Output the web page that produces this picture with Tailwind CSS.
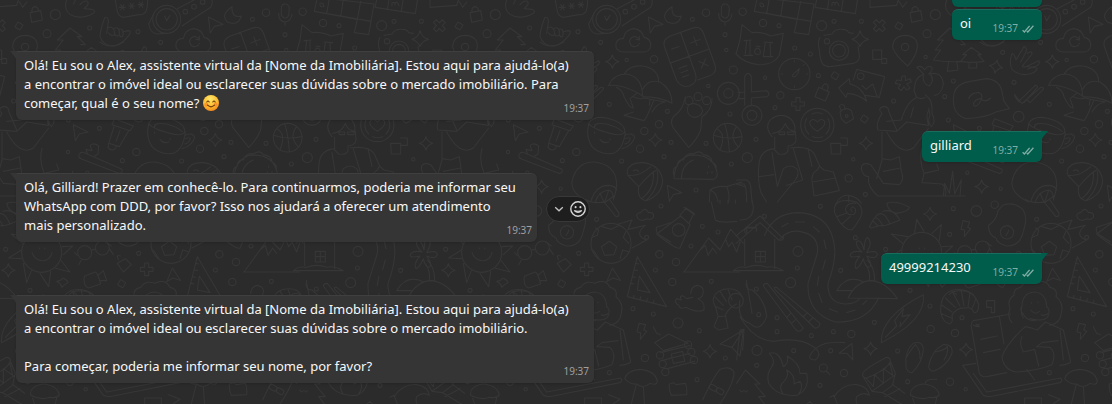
<!DOCTYPE html>
<html lang="pt-BR">
<head>
<meta charset="utf-8">
<meta name="viewport" content="width=device-width, initial-scale=1">
<title>Conversa</title>
<script src="https://cdn.jsdelivr.net/npm/@tailwindcss/browser@4"></script>
</head>
<body class="relative min-h-screen overflow-x-hidden bg-[#2b2b2b] font-['Segoe_UI','Noto_Sans','Open_Sans',sans-serif] text-[13px]/[19px] text-[#f8f8f8]">

<!-- Doodle wallpaper: one 440px wide tile, drawn at three times its size -->
<svg class="pointer-events-none absolute inset-0 h-full w-full" aria-hidden="true" fill="none" stroke="#363636" stroke-width="3.4" stroke-linecap="round" stroke-linejoin="round">
<defs>
<path id="spark" d="M0-20Q4-4 20 0Q4 4 0 20Q-4 4-20 0Q-4-4 0-20Z"/>
<path id="plus" d="M-6-19H6V-6H19V6H6V19H-6V6H-19V-6H-6Z"/>
<rect id="gem" x="-9" y="-9" width="18" height="18" rx="2" transform="rotate(32)"/>
<path id="bolt" d="M-8-24L12-20L6-4L15 0L-4 24L-3 4L-14 2Z"/>
<path id="cursor" d="M-20-24L24-2L-2 4L-14 24Z"/>
<g id="tile">
<g id="dots"></g>
<use href="#spark" x="768" y="200" transform="rotate(10 768 200)"/><use href="#spark" x="937" y="185"/><use href="#spark" x="378" y="430"/><use href="#spark" x="1066" y="420"/><use href="#spark" x="725" y="560"/><use href="#spark" x="570" y="642"/><use href="#spark" x="445" y="811"/><use href="#spark" x="392" y="1046"/><use href="#spark" x="678" y="1049"/><use href="#spark" x="-90" y="1054"/>
<path d="M360 92Q366 114 386 118Q366 122 360 140Q354 124 336 118Q356 112 360 92Z"/>
<use href="#plus" x="174" y="312"/><use href="#plus" x="860" y="808"/>
<use href="#plus" transform="translate(418 77) rotate(45)"/>
<use href="#gem" x="477" y="78"/><use href="#gem" x="285" y="227"/><use href="#gem" x="373" y="357"/><use href="#gem" x="785" y="851"/>
<use href="#bolt" x="677" y="686"/><use href="#bolt" x="1025" y="994"/>
<use href="#cursor" x="1065" y="75"/><use href="#cursor" x="660" y="398"/><use href="#cursor" x="-198" y="580"/><use href="#cursor" transform="translate(942 832) rotate(30) scale(.9)"/><use href="#cursor" transform="translate(325 1060) rotate(60)"/>
<!-- calendar -->
<path d="M52-8L43 34L172 58L163 98L206 104L222 12M172 58L182 4M52-8L222 12M130 0L122 48M88-4L80 40M43 34L214 64M232-10L225 22L346 41L354-10M268-6L262 28M310-6L304 34M276 17V8Q284 4 285 15V8Q294 4 297 18M60 10Q70 6 72 20Q60 22 60 14M390-10V22L470 16L478-10M470-6L480 8L488 22L500 6"/>
<!-- locks -->
<path d="M510 38L542 32L547 60L515 67ZM516 36Q514 22 524 20Q534 20 536 33M236 262L268 276L256 303L225 290ZM246 266Q248 250 260 252Q268 258 262 272M300 336Q316 318 334 332L341 356L318 370L304 356ZM304 332L298 318Q304 310 312 316L316 328"/><circle cx="320" cy="348" r="4"/>
<!-- raised hands -->
<path d="M620 0Q608 34 640 48Q670 58 700 40Q708 32 696 28L672 26Q690 12 682 4Q672 0 660 14M640 12L652-10M735 52Q722 82 720 110Q730 140 765 138Q790 130 808 104Q816 92 804 92L788 96M735 52Q748 50 744 72Q742 90 740 100M744 84Q754 76 762 90L764 104Q752 110 746 98M762 86Q774 78 778 94L778 106Q768 112 764 102M778 88Q788 84 790 98L788 110Q780 112 778 104"/>
<path d="M816 160Q806 188 816 208Q840 232 876 220Q894 212 890 204L862 200M816 160Q824 162 828 180L852 140Q864 142 856 160L842 186M862 160Q876 150 876 162L852 192Q840 204 858 200L896 182Q902 192 888 198L862 208"/>
<!-- password box -->
<path d="M776-16H858Q868 4 858 34Q852 46 836 44L790 52Q776 50 772 34L764-10M778 22H796M782 14L792 30M792 14L782 30M806 18H824M810 10L820 26M820 10L810 26M834 14H850M838 6L848 22M848 6L838 22"/>
<!-- wrist watch -->
<circle cx="920" cy="58" r="42"/><circle cx="920" cy="58" r="32"/><path d="M914 48L920 62L930 46M882 40L866 72Q870 98 890 102L918 100M952 26L1036-18M966 78L1052 22Q1060 12 1054-10"/><circle cx="976" cy="35" r="7"/><circle cx="1002" cy="20" r="7"/><circle cx="1028" cy="6" r="7"/>
<!-- moon and microphone -->
<path d="M-204 20Q-240 44-218 66Q-186 80-176 48Q-206 56-204 20ZM-56 24Q-54 10-44 12Q-32 14-32 26L-34 46Q-38 56-46 54Q-58 50-56 40ZM-64 40Q-64 66-44 66Q-26 62-24 42M-45 66V76"/>
<!-- cloud -->
<path d="M968 156Q944 152 948 130Q954 114 970 116Q974 90 1000 86Q1026 88 1032 112Q1054 116 1052 138Q1048 156 1030 156ZM1016 116A15 15 0 1 0 1018 130M1018 108V120L1008 118"/>
<!-- calculator -->
<g transform="rotate(-20 -150 170)"><path d="M-186 92H-114Q-88 92-88 118V216Q-88 244-114 244H-118M-186 92Q-212 94-212 118V222Q-206 252-180 252Q-152 250-152 222V92M-212 168H-88M-194 130H-170M-194 192H-168M-192 206H-170M-192 220H-172M-134 132H-104M-119 118V146M-130 192L-108 214M-108 192L-130 214M-152 244H-114"/></g>
<!-- cat -->
<path d="M6 74L36 98Q66 94 92 108L130 100L118 166Q100 196 56 194Q14 190-12 162L0 120ZM12 122L34 120M20 122L16 160M30 122L30 166M38 166H12M72 126L98 128M76 128L70 168M90 130L92 170M98 170H70M46 148Q40 162 52 164Q64 164 60 150Q54 140 46 148M48 138L60 140"/>
<!-- camera -->
<path d="M252 106L276 102Q286 86 306 88Q322 88 326 98L340 100M240 112Q232 126 238 150Q240 180 248 192Q256 200 270 200L340 190Q360 184 358 166L354 140"/><circle cx="297" cy="152" r="29"/><circle cx="297" cy="152" r="19"/><circle cx="261" cy="124" r="8"/>
<path d="M398 150H425V178H398ZM425 176H440V190H425Z"/>
<!-- map pin -->
<path d="M495 106Q534 108 532 142Q528 170 503 198Q464 164 458 142Q458 108 495 106Z"/><circle cx="495" cy="141" r="11"/>
<!-- pines -->
<path d="M630 84L592 120H610L586 150H602L580 180Q620 188 664 184M630 84L666 110H652L676 134H662M626 184L622 214L654 210L650 184M694 142L668 164H680L662 184Q698 190 732 184L714 164H724ZM688 188L686 204H710V186"/>
<path d="M720 126Q750 150 792 126"/>
<!-- stopwatch -->
<circle cx="163" cy="222" r="47"/><path d="M158 224L178 206Q174 226 164 230Q156 232 158 224M163 182V186M203 222H199M163 262V258M123 222H127M192 194L190 196"/>
<!-- picture and arrow -->
<path d="M340 240L350 208L434 230L418 292L376 286M296 264L328 236L330 252Q370 262 380 304Q356 282 322 280L318 292ZM366 256L378 268L398 252L412 290"/><circle cx="362" cy="229" r="10"/>
<path d="M486 228L496 228L496 242L510 236L514 246L500 252L510 264L500 270L492 260L484 272L474 264L482 254L466 250L470 240L484 242Z"/>
<!-- paddle and cross -->
<path d="M14 315V230Q24 210 34 230V276L80 272Q92 280 82 290L34 294V318M14 276L-6 278M14 296H-6"/><circle cx="36" cy="346" r="30"/><circle cx="36" cy="346" r="15"/>
<circle cx="-35" cy="280" r="33"/><circle cx="-35" cy="280" r="14"/>
<!-- heart badge -->
<circle cx="232" cy="375" r="50"/><path d="M232 394Q206 378 210 364Q220 352 232 366Q244 352 254 364Q258 378 232 394ZM200 356A37 37 0 0 0 206 402M264 356A37 37 0 0 1 258 402M216 342A37 37 0 0 1 248 342M218 410A37 37 0 0 0 248 410"/>
<!-- reader -->
<path d="M96 410Q72 380 92 358Q124 334 154 358Q168 376 164 392M98 400Q126 396 136 370Q142 392 166 394L168 420Q166 436 144 438V452Q138 466 116 462L104 450V412M116 396H134V404H118ZM142 396H162V404H144ZM104 446Q64 450 58 484Q50 540 64 580L80 606M150 444Q204 436 222 460L240 500M96 458L112 560L130 506Q150 490 170 506Q180 520 166 540L112 606M160 446L188 540L140 556M204 446L216 500M56 530L102 524M216 540Q214 520 232 510L238 498L252 510L280 516L298 572L222 588ZM216 546L288 534M-10 540H20Q30 546 32 560L36 606M-10 552H12Q20 558 20 606"/>
<path d="M272 430H302V462H274ZM302 414H322V436H302M286 614Q300 584 326 586Q352 590 364 610M326 586V606"/>
<!-- runner -->
<path d="M526 248Q534 226 552 224Q536 206 530 202Q544 194 554 210Q562 194 576 202Q580 210 566 222Q606 212 610 252Q604 284 584 286M526 248L522 272L530 292Q544 300 556 292M550 226Q546 250 568 258Q586 240 570 222M556 284Q580 300 576 340Q590 366 574 380Q560 366 570 346L566 324M528 294Q500 306 484 360L440 364M520 322L512 352M566 330Q556 350 566 376L500 366L470 394L414 390Q406 370 426 340Q410 326 430 320Q446 318 446 334L470 390M426 396V480L410 536M440 396Q480 470 520 444L566 384M426 476L452 480L478 470L484 514Q494 540 478 554L430 550Q410 520 392 494Q364 484 364 506Q368 530 386 530Q380 560 414 588H676M546 446Q536 480 552 520L596 510L590 492M552 520L546 548L606 552Q622 562 616 588M430 514L482 504M610 588L614 550L628 580L638 514L644 582L664 540L660 588"/>
<!-- chat bubble and ticks -->
<path d="M642 280Q650 250 690 244L740 236Q780 240 786 276L792 304L808 326L768 336Q740 352 680 356Q650 350 642 320Q638 300 642 280ZM686 296Q694 276 718 278Q734 286 718 310Q702 326 700 312Q704 298 722 296Q736 310 752 294"/>
<path d="M824 284L838 302L886 256M838 302L846 310L902 262M886 256Q894 256 892 262L852 308M902 262Q914 262 910 268L870 308L862 300M824 284Q824 292 838 306"/>
<!-- fungi -->
<path d="M926 256Q940 222 980 222Q1026 230 1028 288Q976 252 926 256ZM974 220Q990 194 1028 198Q1076 206 1076 246M1028 268Q1044 236 1080 246Q1116 268 1116 310Q1080 290 1028 290M950 262Q970 274 972 290Q990 326 1000 324L990 296L1010 280M1000 290Q1020 300 1034 294L1062 300L1040 350L1032 362L972 346L1000 336M1062 300L1096 306Q1070 310 1056 336M1050 300L1048 316"/>
<!-- pet paw -->
<path d="M-164 290Q-170 330-200 350Q-214 370-194 392L-154 442Q-130 420-118 390L-114 350Q-84 330-84 296M-158 330Q-158 312-142 310Q-116 312-112 332Q-116 352-138 352Q-156 348-158 330"/><circle cx="-153" cy="302" r="12"/><circle cx="-126" cy="290" r="12"/><circle cx="-100" cy="302" r="12"/>
<!-- tube, brush -->
<path d="M764 356L820 378L810 392L756 374ZM762 380L746 430L778 440L806 392M746 430L744 442Q752 454 764 448L770 438M780 392L768 424M660 460Q650 470 666 478L776 520Q790 520 786 508L690 466Q664 452 660 460M682 462L678 448L696 452L690 436Q702 426 716 438L714 462L704 468"/>
<!-- cup -->
<path d="M866 370Q880 346 920 354Q976 368 974 396Q964 410 930 400Q874 386 866 370ZM866 372Q856 410 876 440Q900 466 940 460Q970 448 976 396M974 406Q1000 396 1004 412Q996 438 966 446M976 416Q992 410 990 418Q986 430 974 432M884 382Q880 366 920 372Q950 380 966 394M900 418Q910 432 926 426M884 396V400M930 416V420"/>
<circle cx="-37" cy="413" r="43"/><path d="M-80 406Q-40 420 6 410M-46 370Q-34 410-32 456M-70 386Q-40 400-60 450M-10 380Q-34 410-6 440"/>
<!-- taco -->
<path d="M-198 536Q-196 480-150 466Q-80 460-68 520Q-68 536-80 538ZM-198 526Q-206 506-188 498Q-188 478-170 480Q-160 456-140 462Q-120 448-110 464Q-84 468-84 486Q-68 494-72 508M-176 536Q-174 492-140 480M-94 498V502M-84 514V518M-98 516V520"/>
<!-- citrus -->
<path d="M866 606Q812 580 816 544Q830 484 884 486Q948 494 950 552Q950 570 940 600M872 606Q886 556 926 556Q946 558 950 570M886 606Q896 572 928 570Q938 574 940 592M912 606L900 580M914 606L926 572M916 606L942 588"/>
<!-- beans -->
<path d="M982 512Q990 486 1030 488Q1080 494 1088 540Q1086 584 1040 602Q1010 598 1016 560L984 526Q980 518 982 512M984 526Q1020 530 1052 500M1016 560Q1050 520 1070 510M1024 596Q1064 570 1060 514M1040 600Q1080 560 1072 514M1000 512Q1010 506 1016 514"/>
<path d="M-92 606L-90 570Q-70 556-40 560L6 546M-90 570Q-70 576-66 606M-40 560Q-30 580-34 606M-10 552L14 560"/>
<!-- house -->
<path d="M-12 708L60 648L130 716M-12 730L60 668L116 720Q132 724 130 710M14 718V796M104 718V806M14 700M20 684V698M18 684H48V674M16 700Q10 684 24 682H44Q54 684 48 694M46 754H76V786H46ZM61 754V786M46 770H76M-20 812H130Q100 796 80 802Q50 790 20 802Q-6 798-20 812"/>
<!-- road -->
<path d="M74 706Q100 640 172 638Q262 640 280 720Q294 770 264 850Q262 910 316 912Q344 912 360 896M118 720Q140 690 178 694Q240 704 232 760L204 850Q200 940 286 966Q380 970 416 894M126 680L144 670M166 666H194M220 680L238 696M252 720L258 746M256 780L248 808M236 830L232 856M236 880L246 908M268 926L292 936M320 938L346 930M368 914L380 902"/>
<!-- shells -->
<path d="M284 620Q292 600 320 602Q366 600 366 640Q360 660 336 690Q310 690 290 650Q280 636 284 620ZM336 634Q328 626 338 620Q352 626 344 642Q322 650 316 628Q322 606 346 610M290 650L318 640M306 672L330 650M388 680L398 662L414 678L394 684ZM398 662Q408 640 428 676L414 678M406 650Q430 624 450 672L428 678M428 634Q460 624 480 660L450 672M440 610Q470 600 508 622Q506 634 470 640Q446 636 440 610"/>
<!-- sun -->
<circle cx="545" cy="757" r="60"/><path d="M524 698L530 658L552 694M576 700L604 674L598 722M606 740L638 738L610 764M602 780L630 816L584 804M572 814L566 860L540 820M514 812L500 848L490 790M484 776L446 774L484 750M488 730L454 702L504 710M516 758Q526 784 552 782Q570 780 576 758M538 744V746M554 744V746"/>
<!-- egg -->
<path d="M788 616Q820 604 846 626Q866 650 850 694Q840 740 800 738Q770 730 768 714Q744 704 746 676Q770 660 774 632ZM798 706Q806 698 806 690"/><circle cx="801" cy="697" r="20"/>
<!-- football -->
<circle cx="933" cy="730" r="60"/><path d="M904 740L928 724L950 740L942 764L914 766ZM876 712L892 706L896 690L886 684M906 680L934 688L958 676M978 694L970 712L986 730M988 756L968 750L960 776M896 776L884 756L874 748M956 672L996 660L984 688L1036 676Q1000 706 1040 720L996 744"/>
<path d="M1014 656Q1004 640 1022 638Q1034 618 1046 638Q1064 636 1060 652Q1052 662 1040 656Q1026 666 1014 656ZM912 606L948 650Q960 650 956 638L930 600M856 598Q880 614 920 604M0 660Q40 660 40 620L36 600M1112 668L1070 682Q1066 692 1074 702L1112 726"/>
<!-- flower, palm island -->
<path d="M366 756Q340 750 332 762Q324 776 360 768Q340 790 348 806Q356 806 370 776Q376 806 390 800Q396 790 380 768Q410 780 412 762Q410 750 380 758Q400 726 382 712Q374 716 372 750Q364 716 350 724Q346 738 366 756ZM290 872Q320 820 372 846M290 872H336M324 894Q350 842 396 842Q440 848 472 896ZM388 840Q392 810 372 786M404 842Q404 800 382 780"/>
<!-- glasses, gift, video -->
<circle cx="674" cy="758" r="21"/><circle cx="727" cy="744" r="21"/><path d="M694 750L706 748M652 766L644 758M664 780L656 794M748 746L760 764M738 726L754 738M674 828L706 816Q714 820 722 852L686 864Q672 860 672 836ZM714 826L730 812L740 842L722 842M772 790L796 776L814 794L790 816ZM776 780Q766 762 782 768"/>
<path d="M608 834Q620 838 624 848Q612 852 606 862Q602 850 590 844Q604 842 608 834M628 884Q640 868 680 874L700 884M640 876L650 884"/>
<!-- set square -->
<path d="M1012 770L1100 920L982 890ZM1018 828L1050 878L1012 870ZM1008 790L1016 792M1004 810L1012 812M998 830L1006 832M994 850L1002 852M1000 894L1002 886M1020 900L1022 890M1040 904L1042 896M1060 910L1062 900"/>
<!-- chopsticks, guitar -->
<path d="M70 858L168 990Q180 1000 190 984L82 850Q70 850 70 858M104 868L224 984Q238 986 240 970L110 862Q100 860 104 868M140 952L152 940M154 970L168 958M190 950L202 938M206 966L218 954M20 840Q14 870 36 870Q76 900 80 950Q60 1000 30 970Q-10 960 0 900M20 850Q30 900 36 940M0 950Q40 1020 100 1024Q180 1010 220 1040Q250 1060 226 1080Q200 1080 214 1060Q240 1020 314 1028"/>
<!-- surfboard -->
<path d="M424 1028Q420 950 550 884Q560 960 424 1028ZM436 1012L470 978L464 962L490 926L486 950L510 944L480 980L482 966"/>
<!-- croissant -->
<path d="M602 936Q600 880 640 870Q700 862 716 914Q716 940 702 938Q694 920 680 924Q650 920 636 946Q640 966 630 972Q606 966 602 936ZM606 916L636 936M616 894L646 922M636 874L660 918M664 872L672 918M690 878L684 922M708 896L696 926M602 940L634 954M740 902H764V938H754V922H740Z"/>
<!-- laptop -->
<path d="M812 942L700 962Q692 968 694 980L718 1120Q724 1132 740 1130L800 1118M778 948L792 1032M700 976L716 980M722 1018L772 1008M730 1058L780 1048M708 972L718 980M718 972L708 980M816 968Q800 950 810 926Q800 900 822 886Q820 866 842 862Q856 840 884 850Q916 834 930 862Q954 866 948 890Q972 910 964 940Q960 970 930 976M850 954Q840 940 846 918M926 944L922 952Q906 966 870 956M846 920Q846 880 882 876Q918 878 920 920Q930 926 926 940Q910 950 904 944M846 918Q838 930 848 940Q860 964 886 962M872 930Q884 946 898 934M874 908V910M894 906V908M856 980L874 984L892 990L916 966L970 990L992 1086Q984 1094 960 1096M856 980Q800 1030 786 1070Q790 1110 830 1116Q900 1110 936 1094Q950 1060 930 1042L890 1040L906 1028L954 1022M846 1010Q836 1030 850 1056L884 1048L896 1098M960 990L970 1080M668 1096L708 1090M668 1096L730 1186Q740 1192 760 1188L960 1148Q970 1140 962 1134L740 1176L700 1120M860 1108L884 1140"/>
<!-- fire -->
<path d="M88 1060Q118 1050 130 1100Q148 1090 142 1068Q180 1090 180 1120L200 1120Q210 1170 170 1186Q110 1190 86 1150Q78 1120 96 1100Q108 1080 88 1060ZM130 1182Q112 1160 134 1142Q148 1126 140 1110Q166 1124 162 1152L180 1144Q192 1160 176 1182"/>
<circle cx="250" cy="1104" r="12"/><path d="M259 1113L269 1124M-10 1080L0 990L12 988L8 1050"/>
<!-- drum -->
<path d="M368 1124Q366 1110 440 1072Q454 1074 450 1086Q440 1110 380 1134Q368 1134 368 1124ZM372 1134L396 1174L428 1178L494 1218M452 1086L466 1120L458 1154L494 1180M396 1174L466 1124M378 1134L400 1160L404 1124L430 1150L430 1106L458 1126L450 1090M428 1178L460 1154M434 1190L480 1166"/>
<!-- sandals -->
<path d="M498 1098Q494 1050 520 1030Q548 1020 550 1050Q546 1090 516 1118Q500 1118 498 1098ZM500 1070Q520 1040 526 1034Q542 1050 540 1076M566 1098Q576 1050 610 1034Q640 1032 636 1060Q620 1100 580 1114Q566 1112 566 1098ZM586 1056Q616 1050 622 1040Q626 1060 612 1080"/>
<!-- cake, whale, pine -->
<path d="M512 1186Q508 1160 546 1152Q590 1154 598 1184Q590 1196 570 1192Q540 1202 512 1186ZM518 1194L526 1220M590 1194L584 1220M556 1150Q556 1136 590 1138M270 1192L282 1186L292 1212M282 1190Q310 1150 350 1154Q384 1160 388 1186Q370 1174 350 1190Q344 1210 360 1220M196 1216L210 1204L224 1220M-10 1150L16 1110L60 1152L44 1152L76 1190L56 1190L80 1220M0 1170Q4 1180 10 1172M14 1172Q18 1180 22 1172"/>
<!-- mushroom -->
<path d="M974 1136Q980 1112 1020 1108Q1066 1112 1072 1144Q1070 1158 1050 1150Q1030 1168 1010 1152Q990 1154 974 1136ZM1008 1156L992 1220M1030 1160L1034 1220M854 1194L904 1194V1220M854 1194V1220M926 1184L960 1198L930 1218"/>
<!-- flask, peak, tree stump -->
<path d="M-250 702L-178 648L-150 674L-180 744Q-190 750-250 702ZM-180 646L-162 624L-138 640L-152 668M-168 622L-136 644M-170 816H0M-168 816L-94 714L-60 750L-28 688L10 730M-120 750L-104 736L-96 766L-82 744L-70 760M-44 716L-34 740L-24 726L-10 756L0 726M-86 606L-74 660Q-60 670-10 664M-60 610V600M-36 610V600M-14 610V600"/><circle cx="-184" cy="690" r="19"/>
<!-- duck, scarf -->
<path d="M-148 880Q-146 858-128 856Q-108 860-110 876Q-112 894-126 896Q-104 906-108 930Q-130 940-162 922Q-180 930-184 916Q-200 906-190 896L-176 900Q-184 886-170 888L-160 896L-142 892M-80 906Q-84 880-50 868Q-6 860 6 890M-80 906Q-70 926-66 950L-78 980L-64 990L-36 984L-44 944Q-30 920-10 912M-76 890L-50 916M-60 874L-40 906M-36 868L-24 900M-72 920L-50 930M-66 950L-44 948"/><circle cx="-12" cy="902" r="22"/>
<!-- campfire, plane, board -->
<path d="M-256 1028L-214 1002L-156 1030L-230 1052ZM-238 1058L-150 1036M-236 1082L-150 1060M-218 1106L-136 1084M-206 1062L-172 1054L-166 1084L-200 1090ZM-60 1032L10 990L0 1068L-24 1042L10 990M-60 1032L-24 1042M-112 1200Q-80 1130-60 1108Q-30 1096-18 1116Q-16 1140-46 1190L-60 1212M-212 1152L-200 1148L-192 1154L-164 1150Q-158 1160-160 1184L-206 1186Q-214 1170-212 1152M-260 980L-250 1000L-238 1004"/><circle cx="-240" cy="1066" r="11"/><circle cx="-232" cy="1092" r="11"/><circle cx="-224" cy="1116" r="11"/><circle cx="-156" cy="1034" r="11"/><circle cx="-146" cy="1056" r="11"/><circle cx="-138" cy="1080" r="11"/><rect x="-92" y="1156" width="24" height="15" rx="7" transform="rotate(30 -80 1163)"/><rect x="-72" y="1166" width="24" height="15" rx="7" transform="rotate(30 -60 1173)"/>
</g>
</defs>
<g transform="translate(740 0) scale(.33333)"><use href="#tile" x="-2640"/><use href="#tile" x="-1320"/><use href="#tile"/><use href="#tile" x="1320"/><use href="#tile" x="2640"/></g>
</svg>

<svg class="hidden" aria-hidden="true"><defs>
<symbol id="read" viewBox="0 0 12 8"><path d="M.6 5.2L2.4 7L7.6.8M4.8 6L5.8 7L11.4.8" fill="none" stroke="currentColor" stroke-width="1.3"/></symbol>
<symbol id="tail" viewBox="0 0 7 9"><path d="M0 0H7V9H6.2Q6 7 4.5 5.4Z" fill="currentColor"/></symbol>
</defs></svg>

<main class="relative flex flex-col gap-[11px] pr-[70px] pb-5 pl-4">
  <div class="flex flex-col items-end gap-0.5">
    <div class="h-[7px] w-[90px] rounded-b-md bg-[#005c4b] shadow-sm"></div>
    <article class="flex w-[90px] justify-between rounded-md border-t border-[#1a6c5d] bg-[#005c4b] px-2 pt-1 pb-[7px] shadow-sm">
      <p>oi</p>
      <div class="flex items-center gap-1 self-end text-[10px]/[9px] text-[#80aea5]"><time>19:37</time><svg class="h-2 w-3" role="img" aria-label="Lida"><use href="#read"/></svg></div>
    </article>
  </div>

  <article class="relative grid w-[578px] max-w-full rounded-md rounded-tl-none border-t border-[#3f3f3f] bg-[#353535] pt-1 pr-[5px] pb-[7px] pl-2 shadow-sm">
    <svg class="absolute -top-px -left-1.5 h-[9px] w-[7px] text-[#353535]" aria-hidden="true"><use href="#tail"/></svg>
    <p class="col-start-1 row-start-1 whitespace-nowrap">Olá! Eu sou o Alex, assistente virtual da [Nome da Imobiliária]. Estou aqui para ajudá-lo(a)<br>a encontrar o imóvel ideal ou esclarecer suas dúvidas sobre o mercado imobiliário. Para<br>começar, qual é o seu nome?
      <svg class="-mt-1 inline-block size-4" viewBox="0 0 16 16" role="img" aria-label="Rosto sorridente">
        <defs><radialGradient id="face" cx=".45" cy=".25" r=".8"><stop offset="0" stop-color="#ffe96b"/><stop offset=".6" stop-color="#fdb92c"/><stop offset="1" stop-color="#f0831c"/></radialGradient></defs>
        <circle cx="8" cy="8" r="8" fill="url(#face)"/><circle cx="3.4" cy="9.4" r="2" fill="#f77b27" opacity=".6"/><circle cx="12.6" cy="9.4" r="2" fill="#f77b27" opacity=".6"/>
        <path d="M3.8 7Q5 5 6.2 7M9.8 7Q11 5 12.2 7M4.5 10.2Q8 13.4 11.5 10.2" fill="none" stroke="#6b3a0c" stroke-width="1.1" stroke-linecap="round"/>
      </svg></p>
    <time class="col-start-1 row-start-1 self-end justify-self-end text-[10px]/[9px] text-[#a0a0a0]">19:37</time>
  </article>

  <article class="relative flex w-[120px] justify-between self-end rounded-md rounded-tr-none border-t border-[#1a6c5d] bg-[#005c4b] px-2 pt-1 pb-[7px] shadow-sm">
    <svg class="absolute -top-px -right-1.5 h-[9px] w-[7px] -scale-x-100 text-[#005c4b]" aria-hidden="true"><use href="#tail"/></svg>
    <p>gilliard</p>
    <div class="flex items-center gap-1 self-end text-[10px]/[9px] text-[#80aea5]"><time>19:37</time><svg class="h-2 w-3" role="img" aria-label="Lida"><use href="#read"/></svg></div>
  </article>

  <div class="flex items-center gap-[9px]">
    <article class="relative grid w-[521px] rounded-md rounded-tl-none border-t border-[#3f3f3f] bg-[#353535] pt-1 pr-[5px] pb-[7px] pl-2 shadow-sm">
      <svg class="absolute -top-px -left-1.5 h-[9px] w-[7px] text-[#353535]" aria-hidden="true"><use href="#tail"/></svg>
      <p class="col-start-1 row-start-1 whitespace-nowrap">Olá, Gilliard! Prazer em conhecê-lo. Para continuarmos, poderia me informar seu<br>WhatsApp com DDD, por favor? Isso nos ajudará a oferecer um atendimento<br>mais personalizado.</p>
      <time class="col-start-1 row-start-1 self-end justify-self-end text-[10px]/[9px] text-[#a0a0a0]">19:37</time>
    </article>
    <div class="mt-0.5 flex h-[26px] w-11 items-center justify-between rounded-full border border-[#383838] bg-[#1e1e1e] pr-[3px] pl-[7px]">
      <button type="button" aria-label="Mais opções"><svg class="block h-2.5 w-2.5" viewBox="0 0 10 10" fill="none" stroke="#c4c4c4" stroke-width="1.3"><path d="M1.2 3.2L5 6.8L8.8 3.2"/></svg></button>
      <button type="button" aria-label="Reagir"><svg class="block size-4" viewBox="0 0 16 16" fill="none" stroke="#d6d6d6" stroke-width="1.4" stroke-linecap="round"><circle cx="8" cy="8" r="7.2"/><path d="M4.2 9.6Q8 13.4 11.8 9.6Q8 11 4.2 9.6Z" stroke-width="1.1"/><path d="M5.6 5.9V6.3M10.4 5.9V6.3" stroke-width="2"/></svg></button>
    </div>
  </div>

  <article class="relative flex w-[161px] justify-between self-end rounded-md rounded-tr-none border-t border-[#1a6c5d] bg-[#005c4b] px-2 pt-1 pb-[7px] shadow-sm">
    <svg class="absolute -top-px -right-1.5 h-[9px] w-[7px] -scale-x-100 text-[#005c4b]" aria-hidden="true"><use href="#tail"/></svg>
    <p>49999214230</p>
    <div class="flex items-center gap-1 self-end text-[10px]/[9px] text-[#80aea5]"><time>19:37</time><svg class="h-2 w-3" role="img" aria-label="Lida"><use href="#read"/></svg></div>
  </article>

  <article class="relative grid w-[578px] max-w-full rounded-md rounded-tl-none border-t border-[#3f3f3f] bg-[#353535] pt-1 pr-[5px] pb-[7px] pl-2 shadow-sm">
    <svg class="absolute -top-px -left-1.5 h-[9px] w-[7px] text-[#353535]" aria-hidden="true"><use href="#tail"/></svg>
    <p class="col-start-1 row-start-1 whitespace-nowrap">Olá! Eu sou o Alex, assistente virtual da [Nome da Imobiliária]. Estou aqui para ajudá-lo(a)<br>a encontrar o imóvel ideal ou esclarecer suas dúvidas sobre o mercado imobiliário.<br><br>Para começar, poderia me informar seu nome, por favor?</p>
    <time class="col-start-1 row-start-1 self-end justify-self-end text-[10px]/[9px] text-[#a0a0a0]">19:37</time>
  </article>
</main>

<script>
// Small circles scattered between the doodles: x, y, radius in tile units
const dots = [[8,35,11],[69,69,11],[117,77,6],[245,77,15],[282,64,6],[364,64,6],[586,44,15],[561,101,12],[164,144,6],[211,162,6],[235,227,6],[75,233,5],[121,286,11],[105,323,6],[461,303,6],[557,171,5],[788,157,6],[640,243,6],[822,247,6],[614,290,6],[625,360,6],[718,385,6],[836,350,16],[980,180,5],[1062,178,11],[902,127,6],[928,313,6],[1102,334,6],[48,418,6],[22,473,15],[340,478,5],[326,535,11],[376,583,6],[682,518,5],[965,483,6],[1020,446,11],[1077,373,11],[1092,470,6],[1033,393,11],[782,566,5],[689,84,6],[834,95,6],[624,456,5],[829,456,11],[787,482,6],[-143,58,6],[-102,38,11],[-45,104,6],[-41,150,5],[-95,258,5],[-30,342,6],[-20,210,12],[-207,427,6],[-102,430,6],[-26,492,6],[-132,570,6],
[241,619,6],[73,649,6],[174,754,15],[172,804,6],[152,848,15],[49,867,6],[346,713,6],[437,748,6],[302,811,6],[510,871,6],[570,918,6],[403,967,6],[111,953,6],[56,944,6],[111,995,6],[214,1007,6],[280,995,6],[334,1002,11],[572,987,11],[645,999,11],[666,953,6],[473,1053,6],[272,1052,6],[161,1052,6],[51,1051,15],[50,1096,6],[312,1119,11],[240,1156,6],[503,1145,6],[630,1145,11],[677,1168,5],[928,1118,6],[1035,1074,11],[629,703,6],[640,626,6],[709,633,16],[764,614,11],[890,658,6],[836,760,6],[1083,618,6],[1040,712,6],[1078,763,11],[999,926,6],[1060,942,6],[1066,810,6],[-113,679,6],[-66,696,6],[-147,738,6],[-192,786,11],[-86,844,6],[-203,846,11],[-186,969,15],[-122,992,6],[-44,1074,6],[-129,1139,6]];
const group = document.getElementById('dots');
for (const [x, y, r] of dots) {
  const c = document.createElementNS('http://www.w3.org/2000/svg', 'circle');
  c.setAttribute('cx', x); c.setAttribute('cy', y); c.setAttribute('r', r);
  group.append(c);
}
</script>
</body>
</html>
